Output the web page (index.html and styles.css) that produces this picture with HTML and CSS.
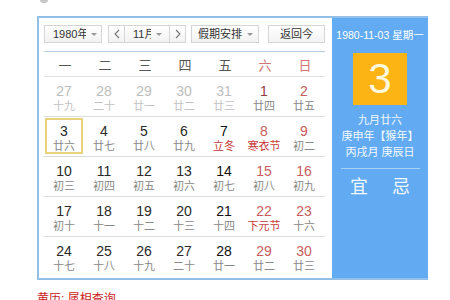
FILE: index.html
```html
<!DOCTYPE html>
<html lang="zh-CN">
<head>
<meta charset="utf-8">
<title>万年历</title>
<link rel="stylesheet" href="styles.css">
</head>
<body>
<div class="page">
  <div class="topbar"><span class="top-icon"></span></div>
  <div class="cal">
    <div class="main">
      <div class="toolbar">
        <div class="sel sel-year"><span class="txt">1980年</span><span class="arr"></span></div>
        <div class="month-group">
          <div class="nav"><svg width="6" height="10" viewBox="0 0 6 10"><path d="M5 1 L1 5 L5 9" fill="none" stroke="#777" stroke-width="1.1"/></svg></div>
          <div class="sel sel-month"><span class="txt">11月</span><span class="arr"></span></div>
          <div class="nav"><svg width="6" height="10" viewBox="0 0 6 10"><path d="M1 1 L5 5 L1 9" fill="none" stroke="#777" stroke-width="1.1"/></svg></div>
        </div>
        <div class="sel sel-holiday"><span class="txt">假期安排</span><span class="arr"></span></div>
        <div class="btn-today">返回今</div>
      </div>
      <div class="week">
        <span>一</span><span>二</span><span>三</span><span>四</span><span>五</span><span class="we">六</span><span class="we">日</span>
      </div>
      <div class="row">
        <div class="day other"><b>27</b><i>十九</i></div>
        <div class="day other"><b>28</b><i>二十</i></div>
        <div class="day other"><b>29</b><i>廿一</i></div>
        <div class="day other"><b>30</b><i>廿二</i></div>
        <div class="day other"><b>31</b><i>廿三</i></div>
        <div class="day sat"><b>1</b><i>廿四</i></div>
        <div class="day sun"><b>2</b><i>廿五</i></div>
      </div>
      <div class="row">
        <div class="day today"><b>3</b><i>廿六</i></div>
        <div class="day"><b>4</b><i>廿七</i></div>
        <div class="day"><b>5</b><i>廿八</i></div>
        <div class="day"><b>6</b><i>廿九</i></div>
        <div class="day strong"><b>7</b><i class="fest">立冬</i></div>
        <div class="day sun"><b>8</b><i class="fest">寒衣节</i></div>
        <div class="day sun"><b>9</b><i>初二</i></div>
      </div>
      <div class="row">
        <div class="day"><b>10</b><i>初三</i></div>
        <div class="day"><b>11</b><i>初四</i></div>
        <div class="day"><b>12</b><i>初五</i></div>
        <div class="day"><b>13</b><i>初六</i></div>
        <div class="day strong"><b>14</b><i>初七</i></div>
        <div class="day sun"><b>15</b><i>初八</i></div>
        <div class="day sun"><b>16</b><i>初九</i></div>
      </div>
      <div class="row">
        <div class="day"><b>17</b><i>初十</i></div>
        <div class="day"><b>18</b><i>十一</i></div>
        <div class="day"><b>19</b><i>十二</i></div>
        <div class="day"><b>20</b><i>十三</i></div>
        <div class="day strong"><b>21</b><i>十四</i></div>
        <div class="day sun"><b>22</b><i class="fest">下元节</i></div>
        <div class="day sun"><b>23</b><i>十六</i></div>
      </div>
      <div class="row last">
        <div class="day"><b>24</b><i>十七</i></div>
        <div class="day"><b>25</b><i>十八</i></div>
        <div class="day"><b>26</b><i>十九</i></div>
        <div class="day"><b>27</b><i>二十</i></div>
        <div class="day strong"><b>28</b><i>廿一</i></div>
        <div class="day sun"><b>29</b><i>廿二</i></div>
        <div class="day sun"><b>30</b><i>廿三</i></div>
      </div>
    </div>
    <div class="side">
      <div class="side-date">1980-11-03 星期一</div>
      <div class="big-day">3</div>
      <div class="lunar">
        <div>九月廿六</div>
        <div>庚申年【猴年】</div>
        <div>丙戌月 庚辰日</div>
      </div>
      <div class="yiji"><span>宜</span><span>忌</span></div>
    </div>
  </div>
  <div class="foot">黄历: 属相查询</div>
</div>
</body>
</html>
```

FILE: styles.css
```css
* { box-sizing: border-box; }
html, body { margin: 0; padding: 0; background: #fff; }
body {
  font-family: "Liberation Sans", "Noto Sans CJK SC", sans-serif;
  color: #333;
  overflow: hidden;
}
.page { padding-left: 37px; }

.topbar { height: 16px; position: relative; }
.top-icon {
  display: block;
  width: 8px; height: 3px;
  margin-left: 3px;
  background: #c8c8c8;
  border-radius: 0 0 4px 4px;
}

.cal {
  display: flex;
  width: 391px;
  border: 2px solid #93c0e6;
  border-right: none;
}

.main {
  width: 293px;
  padding: 7px 7px 2px 5px;
  background: #fff;
}

.toolbar {
  display: flex;
  align-items: center;
  height: 27px;
  padding-bottom: 8px;
  border-bottom: 1px solid #b3cce2;
}
.sel {
  height: 18px;
  display: flex;
  align-items: center;
  justify-content: space-between;
  border: 1px solid #d6d6d6;
  background: linear-gradient(#ffffff, #f2f2f2);
  font-size: 11px;
  color: #333;
}
.sel .txt { overflow: hidden; white-space: nowrap; display: block; line-height: 16px; }
.arr {
  width: 0; height: 0;
  border-top: 3px solid #999;
  border-left: 3px solid transparent;
  border-right: 3px solid transparent;
}
.sel-year { width: 58px; padding: 0 4px 0 8px; }
.sel-year .txt { width: 33px; }
.month-group { display: flex; margin-left: 6px; }
.nav {
  width: 17px; height: 18px;
  border: 1px solid #d6d6d6;
  background: linear-gradient(#ffffff, #f2f2f2);
  display: flex; align-items: center; justify-content: center;
}
.nav + .sel { border-left: none; }
.sel + .nav { border-left: none; width: 16px; }
.sel-month { width: 45px; padding: 0 7px 0 8px; }
.sel-month .txt { width: 18px; }
.sel-holiday { width: 68px; margin-left: 5px; padding: 0 5px 0 6px; }
.sel-holiday .txt { width: 46px; }
.btn-today {
  width: 57px; height: 18px;
  margin-left: 9px;
  border: 1px solid #d6d6d6;
  background: linear-gradient(#ffffff, #f3f3f3);
  font-size: 11px;
  line-height: 16px;
  text-align: center;
  color: #333;
}

.week, .row {
  display: grid;
  grid-template-columns: repeat(7, 40px);
  padding-left: 1px;
}
.week {
  height: 25px;
  border-bottom: 1px solid #e0e0e0;
  font-size: 13px;
  color: #555;
  align-items: center;
  text-align: center;
}
.week .we { color: #d27474; }

.row {
  height: 40px;
  border-bottom: 1px solid #dcdcdc;
}
.row.last { border-bottom: none; height: 39px; }

.day {
  width: 38px; height: 36px;
  margin-top: 1px;
  border: 2px solid transparent;
  padding-top: 3px;
  display: flex;
  flex-direction: column;
  align-items: center;
}
.day b {
  font-weight: normal;
  font-size: 14px;
  line-height: 16px;
  color: #2a2a2a;
}
.day i {
  font-style: normal;
  font-size: 11px;
  line-height: 14px;
  color: #888;
}
.day.strong b { color: #111; }
.day.other b { color: #bdbdbd; }
.day.other i { color: #c2c2c2; }
.day.sat b { color: #9a3b3b; }
.day.sun b { color: #c95c5c; }
.day i.fest { color: #c83a3a; }
.day.today { border-color: #e8d27c; }

.side {
  width: 96px;
  background: #62abf2;
  color: #fff;
  display: flex;
  flex-direction: column;
  align-items: center;
  padding-top: 10px;
}
.side-date {
  font-size: 10.5px;
  line-height: 14px;
  white-space: nowrap;
}
.big-day {
  width: 54px; height: 52px;
  margin-top: 11px;
  background: #fbb414;
  color: #fff8dc;
  font-size: 42px;
  line-height: 52px;
  text-align: center;
}
.lunar {
  margin-top: 7px;
  font-size: 11px;
  line-height: 16px;
  text-align: center;
  color: #f4f9ff;
}
.yiji {
  width: 79px;
  margin-top: 8px;
  border-top: 1px solid #a6cff6;
  padding-top: 6px;
  display: flex;
  justify-content: center;
  gap: 24px;
  font-size: 18px;
  line-height: 24px;
  color: #f2f8ff;
}

.foot {
  margin-top: 12px;
  font-size: 12px;
  line-height: 14px;
  color: #c22;
}
```
